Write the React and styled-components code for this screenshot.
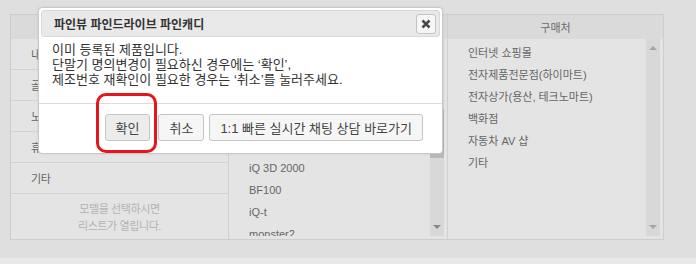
import React from "react";
import styled, { createGlobalStyle } from "styled-components";

const GlobalStyle = createGlobalStyle`
  html, body {
    margin: 0;
    padding: 0;
    background: #dfdfdf;
  }
  body {
    font-family: "Liberation Sans", "Noto Sans CJK KR", sans-serif;
  }
`;

const categories = ["내비게이션", "골프거리측정기", "노트북", "휴대폰", "기타"];
const models = ["iQ 3D 2000", "BF100", "iQ-t", "monster2"];
const shops = [
  "인터넷 쇼핑몰",
  "전자제품전문점(하이마트)",
  "전자상가(용산, 테크노마트)",
  "백화점",
  "자동차 AV 샵",
  "기타",
];

function App() {
  return (
    <Page>
      <GlobalStyle />
      <Table>
        <Column>
          <HeadCell />
          {categories.map((c) => (
            <CategoryRow key={c}>{c}</CategoryRow>
          ))}
          <Placeholder>
            모델을 선택하시면
            <br />
            리스트가 열립니다.
          </Placeholder>
        </Column>
        <Column>
          <HeadCell />
          <ListBody>
            <List $offset={118}>
              {models.map((m) => (
                <Item key={m}>{m}</Item>
              ))}
            </List>
            <Scrollbar>
              <Arrow $up />
              <Thumb />
              <Arrow />
            </Scrollbar>
          </ListBody>
        </Column>
        <Column $last>
          <HeadCell>구매처</HeadCell>
          <ListBody>
            <List $offset={2}>
              {shops.map((s) => (
                <Item key={s}>{s}</Item>
              ))}
            </List>
            <Scrollbar>
              <Arrow $up $disabled />
              <Spacer />
              <Arrow $disabled />
            </Scrollbar>
          </ListBody>
        </Column>
      </Table>
      <BottomBand />

      <Dialog>
        <TitleBar>
          <Title>파인뷰 파인드라이브 파인캐디</Title>
          <CloseButton aria-label="close">
            <svg width="10" height="10" viewBox="0 0 10 10">
              <path d="M1.5 1.5 L8.5 8.5 M8.5 1.5 L1.5 8.5" stroke="#4a4a4a" strokeWidth="2.6" />
            </svg>
          </CloseButton>
        </TitleBar>
        <Message>
          이미 등록된 제품입니다.
          <br />
          단말기 명의변경이 필요하신 경우에는 ‘확인’,
          <br />
          제조번호 재확인이 필요한 경우는 ‘취소’를 눌러주세요.
        </Message>
        <ButtonPane>
          <Button $active>확인</Button>
          <Button>취소</Button>
          <Button>1:1 빠른 실시간 채팅 상담 바로가기</Button>
        </ButtonPane>
        <Highlight />
      </Dialog>
    </Page>
  );
}

export default App;

const Page = styled.div`
  position: relative;
  width: 696px;
  height: 264px;
  padding: 14px 0 0 10px;
  box-sizing: border-box;
  background: #dfdfdf;
  overflow: hidden;
`;

const Table = styled.div`
  width: 654px;
  height: 226px;
  box-sizing: border-box;
  border: 1px solid #cdcdcd;
  display: grid;
  grid-template-columns: 218px 219px 1fr;
  background: #e4e4e4;
`;

const Column = styled.div`
  display: flex;
  flex-direction: column;
  min-height: 0;
  border-right: ${(p) => (p.$last ? "none" : "1px solid #d0d0d0")};
`;

const HeadCell = styled.div`
  height: 24px;
  flex: none;
  display: flex;
  align-items: center;
  justify-content: center;
  background: #dadada;
  color: #6a6a6a;
  font-size: 11px;
`;

const CategoryRow = styled.div`
  height: 30px;
  flex: none;
  display: flex;
  align-items: center;
  padding-left: 20px;
  border-bottom: 1px solid #d3d3d3;
  color: #666;
  font-size: 11px;
  letter-spacing: -0.4px;
`;

const Placeholder = styled.div`
  padding-top: 7px;
  text-align: center;
  color: #b3b3b3;
  font-size: 11px;
  line-height: 17px;
  letter-spacing: -0.4px;
`;

const ListBody = styled.div`
  flex: 1;
  min-height: 0;
  display: flex;
  padding: 0 3px 3px 0;
`;

const List = styled.div`
  flex: 1;
  overflow: hidden;
  padding: ${(p) => p.$offset}px 0 0 20px;
  background: #e4e4e4;
`;

const Item = styled.div`
  height: 22px;
  display: flex;
  align-items: center;
  color: #666;
  font-size: 11px;
  white-space: nowrap;
`;

const Scrollbar = styled.div`
  width: 14px;
  display: flex;
  flex-direction: column;
  align-items: center;
  background: #d8d8d8;
  padding: 7px 0;
  box-sizing: border-box;
`;

const Spacer = styled.div`
  flex: 1;
`;

const Thumb = styled.div`
  align-self: stretch;
  margin: 60px 0 auto;
  height: 48px;
  flex: none;
  background: #b9b9b9;
`;

const Arrow = styled.div`
  width: 0;
  height: 0;
  border-left: 4px solid transparent;
  border-right: 4px solid transparent;
  ${(p) =>
    p.$up
      ? `border-bottom: 4px solid ${p.$disabled ? "#a5a5a5" : "#8a8a8a"};`
      : `border-top: 4px solid ${p.$disabled ? "#a5a5a5" : "#8a8a8a"};`}
`;

const BottomBand = styled.div`
  position: absolute;
  left: 0;
  right: 0;
  bottom: 0;
  height: 6px;
  background: #e9e9e9;
`;

const Dialog = styled.div`
  position: absolute;
  left: 38px;
  top: 7px;
  width: 405px;
  height: 147px;
  box-sizing: border-box;
  background: #fff;
  border: 1px solid #c8c8c8;
  border-radius: 4px;
  box-shadow: 0 0 3px rgba(0, 0, 0, 0.08);
  display: flex;
  flex-direction: column;
`;

const TitleBar = styled.div`
  margin: 2px 2px 0;
  height: 27px;
  box-sizing: border-box;
  border: 1px solid #d8d8d8;
  border-radius: 3px;
  background: #e9e9e9;
  display: flex;
  align-items: center;
  justify-content: space-between;
  padding: 0 3px 0 12px;
`;

const Title = styled.div`
  font-size: 12px;
  font-weight: bold;
  color: #333;
`;

const CloseButton = styled.button`
  width: 20px;
  height: 20px;
  padding: 0;
  border: 1px solid #c3c3c3;
  border-radius: 3px;
  background: #f6f6f6;
  display: flex;
  align-items: center;
  justify-content: center;
`;

const Message = styled.div`
  padding: 5px 13px 0;
  height: 61px;
  font-size: 13px;
  line-height: 15px;
  color: #333;
`;

const ButtonPane = styled.div`
  border-top: 1px solid #dcdcdc;
  display: flex;
  justify-content: flex-end;
  gap: 5px;
  padding: 10px 19px 0 0;
`;

const Button = styled.button`
  height: 27px;
  padding: 0 10px;
  border: 1px solid #c5c5c5;
  border-radius: 3px;
  background: ${(p) => (p.$active ? "#ececec" : "#f6f6f6")};
  color: #454545;
  font-family: "Liberation Sans", "Noto Sans CJK KR", sans-serif;
  font-size: 13px;
  margin-right: ${(p) => (p.$active ? "3px" : "0")};
`;

const Highlight = styled.div`
  position: absolute;
  left: 57px;
  top: 85px;
  width: 61px;
  height: 60px;
  box-sizing: border-box;
  border: 3px solid #e5141d;
  border-radius: 10px;
  pointer-events: none;
`;
